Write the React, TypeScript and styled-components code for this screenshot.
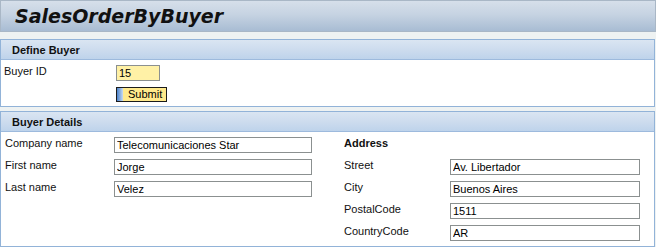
import React from 'react';
import styled, { createGlobalStyle } from 'styled-components';

const GlobalStyle = createGlobalStyle`
  * { box-sizing: border-box; }
  body {
    margin: 0;
    font-family: "Liberation Sans", Arial, sans-serif;
    font-size: 11px;
    color: #000;
    background: #eef2f2;
  }
`;

const Page = styled.div`
  width: 656px;
  height: 247px;
  overflow: hidden;
  display: flex;
  flex-direction: column;
  background: #eef2f2;
`;

const TitleBar = styled.div`
  height: 32px;
  display: flex;
  align-items: center;
  padding-left: 14px;
  border: 1px solid #a9b7c6;
  background: linear-gradient(to bottom, #d6dfea 0%, #c6d3e2 45%, #a8bcd3 100%);
`;

const Title = styled.h1`
  margin: 0;
  font-family: "DejaVu Sans", Verdana, sans-serif;
  font-size: 19px;
  font-weight: bold;
  font-style: italic;
  color: #111;
`;

const Panel = styled.section<{ $top: number; $height: number }>`
  margin-top: ${p => p.$top}px;
  width: 655px;
  height: ${p => p.$height}px;
  border: 1px solid #92b3d8;
  background: #fff;
  display: flex;
  flex-direction: column;
`;

const PanelHeader = styled.div`
  height: 20px;
  flex: none;
  display: flex;
  align-items: center;
  padding-left: 11px;
  border-bottom: 1px solid #9dbadd;
  background: linear-gradient(to bottom, #dae5f2 0%, #cddcee 50%, #bed3eb 100%);
  font-weight: bold;
  font-size: 11px;
  color: #111;
`;

const DefineBody = styled.div`
  padding: 5px 0 0 3px;
  display: grid;
  grid-template-columns: 112px auto;
  row-gap: 6px;
  align-items: start;
  justify-items: start;
`;

const DetailsBody = styled.div`
  padding: 5px 0 0 4px;
  display: flex;
  align-items: flex-start;
`;

const Column = styled.div<{ $labelWidth: number; $inputWidth: number; $offset?: number }>`
  margin-left: ${p => p.$offset ?? 0}px;
  display: grid;
  grid-template-columns: ${p => p.$labelWidth}px ${p => p.$inputWidth}px;
  row-gap: 6px;
  align-items: start;
`;

const Label = styled.div`
  height: 16px;
  line-height: 12px;
  white-space: nowrap;
  color: #111;
`;

const GroupTitle = styled.div`
  grid-column: 1 / span 2;
  height: 16px;
  line-height: 12px;
  font-weight: bold;
  color: #111;
`;

const Field = styled.input<{ $yellow?: boolean; $width?: number }>`
  display: block;
  width: ${p => (p.$width ? `${p.$width}px` : '100%')};
  height: 16px;
  margin: 0;
  padding: 0 2px;
  border: 1px solid #8b9090;
  border-radius: 0;
  outline: none;
  background: ${p => (p.$yellow ? '#fff1a6' : '#fff')};
  font-family: "Liberation Sans", Arial, sans-serif;
  font-size: 11px;
  line-height: 14px;
  color: #000;
`;

const SubmitButton = styled.button`
  grid-column: 2;
  width: 51px;
  height: 15px;
  margin: 0;
  padding: 0 0 0 11px;
  text-align: left;
  border: 1px solid #1b1b1b;
  border-radius: 0;
  background: linear-gradient(to right, #4a82cc 0px, #c9dbf1 6px, #ffea8e 6px, #ffe98a 100%);
  font-family: "Liberation Sans", Arial, sans-serif;
  font-size: 11px;
  line-height: 13px;
  color: #000;
`;

const buyer = [
  ['Company name', 'Telecomunicaciones Star'],
  ['First name', 'Jorge'],
  ['Last name', 'Velez'],
];

const address = [
  ['Street', 'Av. Libertador'],
  ['City', 'Buenos Aires'],
  ['PostalCode', '1511'],
  ['CountryCode', 'AR'],
];

export default function App() {
  return (
    <>
      <GlobalStyle />
      <Page>
        <TitleBar>
          <Title>SalesOrderByBuyer</Title>
        </TitleBar>

        <Panel $top={7} $height={68}>
          <PanelHeader>Define Buyer</PanelHeader>
          <DefineBody>
            <Label>Buyer ID</Label>
            <Field $yellow $width={44} defaultValue="15" />
            <SubmitButton>Submit</SubmitButton>
          </DefineBody>
        </Panel>

        <Panel $top={4} $height={136}>
          <PanelHeader>Buyer Details</PanelHeader>
          <DetailsBody>
            <Column $labelWidth={109} $inputWidth={198}>
              {buyer.map(([label, value]) => (
                <React.Fragment key={label}>
                  <Label>{label}</Label>
                  <Field defaultValue={value} />
                </React.Fragment>
              ))}
            </Column>
            <Column $labelWidth={106} $inputWidth={190} $offset={32}>
              <GroupTitle>Address</GroupTitle>
              {address.map(([label, value]) => (
                <React.Fragment key={label}>
                  <Label>{label}</Label>
                  <Field defaultValue={value} />
                </React.Fragment>
              ))}
            </Column>
          </DetailsBody>
        </Panel>
      </Page>
    </>
  );
}
